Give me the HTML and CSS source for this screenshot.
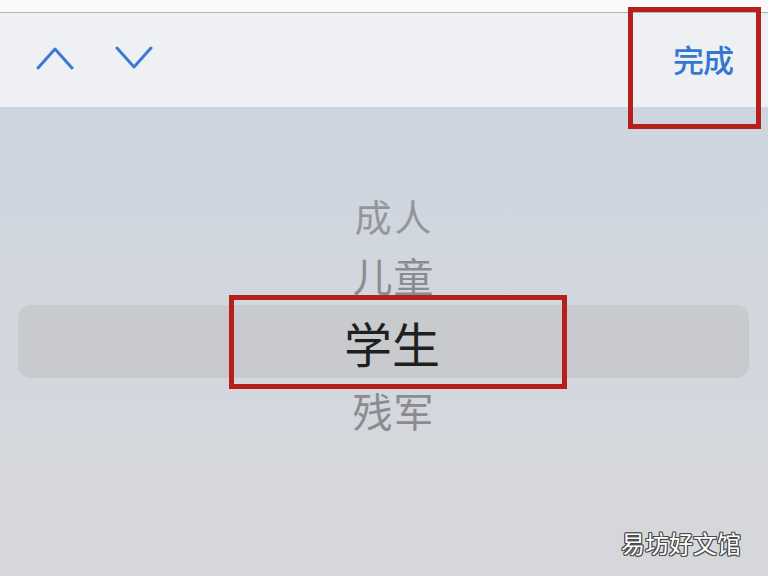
FILE: index.html
```html
<!DOCTYPE html>
<html lang="zh">
<head>
<meta charset="utf-8">
<link rel="stylesheet" href="styles.css">
</head>
<body>
<div class="screen">
  <div class="topstrip"></div>
  <div class="toolbar">
    <div class="arrows">
      <svg class="chev" width="38" height="24" viewBox="0 0 38 24"><path d="M2 22 L19 3 L36 22" fill="none" stroke="#3b79d4" stroke-width="3" stroke-linecap="round" stroke-linejoin="round"/></svg>
      <svg class="chev" width="38" height="24" viewBox="0 0 38 24"><path d="M2 2 L19 21 L36 2" fill="none" stroke="#3b79d4" stroke-width="3" stroke-linecap="round" stroke-linejoin="round"/></svg>
    </div>
    <div class="done">完成</div>
  </div>
  <div class="picker">
    <div class="item far">成人</div>
    <div class="item near">儿童</div>
    <div class="item selected">学生</div>
    <div class="item below">残军</div>
  </div>
  <div class="mark mark-done"></div>
  <div class="mark mark-sel"></div>
  <div class="watermark">易坊好文馆</div>
</div>
</body>
</html>
```

FILE: styles.css
```css
html, body {
  margin: 0;
  padding: 0;
}
body {
  font-family: "Noto Sans CJK SC", "Noto Sans", sans-serif;
}
.screen {
  position: relative;
  width: 768px;
  height: 576px;
  overflow: hidden;
  display: flex;
  flex-direction: column;
  background: #d6d7db;
}
.topstrip {
  height: 12px;
  background: #f9f9f9;
  border-bottom: 1px solid #b4b4b6;
  flex: none;
}
.toolbar {
  height: 94px;
  flex: none;
  background: #eff0f4;
  display: flex;
  align-items: center;
  justify-content: space-between;
  padding: 0 35px 0 36px;
}
.arrows {
  display: flex;
  gap: 41px;
  margin-top: -4px;
}
.done {
  font-size: 31px;
  color: #3477d2;
  font-weight: 500;
  margin-top: -4px;
  letter-spacing: -1px;
}
.picker {
  flex: 1;
  background: linear-gradient(#cdd5e0 0%, #d3d7de 45%, #d6d7db 100%);
  display: flex;
  flex-direction: column;
  align-items: center;
  padding-top: 79px;
}
.item {
  align-self: stretch;
  text-align: center;
  color: #8b8c91;
  display: flex;
  align-items: center;
  justify-content: center;
  padding-left: 18px;
}
.far {
  height: 59px;
  font-size: 37px;
  color: #95969b;
  letter-spacing: 3px;
  padding-left: 21px;
}
.near {
  height: 60px;
  font-size: 40px;
  letter-spacing: 1px;
  padding-left: 19px;
}
.selected {
  height: 73px;
  margin: 0 19px 0 18px;
  border-radius: 13px;
  background: #c9cace;
  color: #1f1f22;
  font-size: 48px;
  letter-spacing: 0;
  padding-left: 17px;
}
.below {
  height: 64px;
  font-size: 40px;
  letter-spacing: 1px;
  padding-left: 19px;
}
.mark {
  position: absolute;
  border: 5px solid #b5201a;
  box-sizing: border-box;
}
.mark-done {
  left: 628px;
  top: 7px;
  width: 133px;
  height: 122px;
}
.mark-sel {
  left: 229px;
  top: 295px;
  width: 338px;
  height: 94px;
}
.watermark {
  position: absolute;
  right: 27px;
  bottom: 16px;
  font-size: 24px;
  color: #ffffff;
  text-shadow: 1px 0 0 #4a4a4a, -1px 0 0 #4a4a4a, 0 1px 0 #4a4a4a, 0 -1px 0 #4a4a4a, 1px 1px 0 #4a4a4a, -1px -1px 0 #4a4a4a, 1px -1px 0 #4a4a4a, -1px 1px 0 #4a4a4a;
}
```
